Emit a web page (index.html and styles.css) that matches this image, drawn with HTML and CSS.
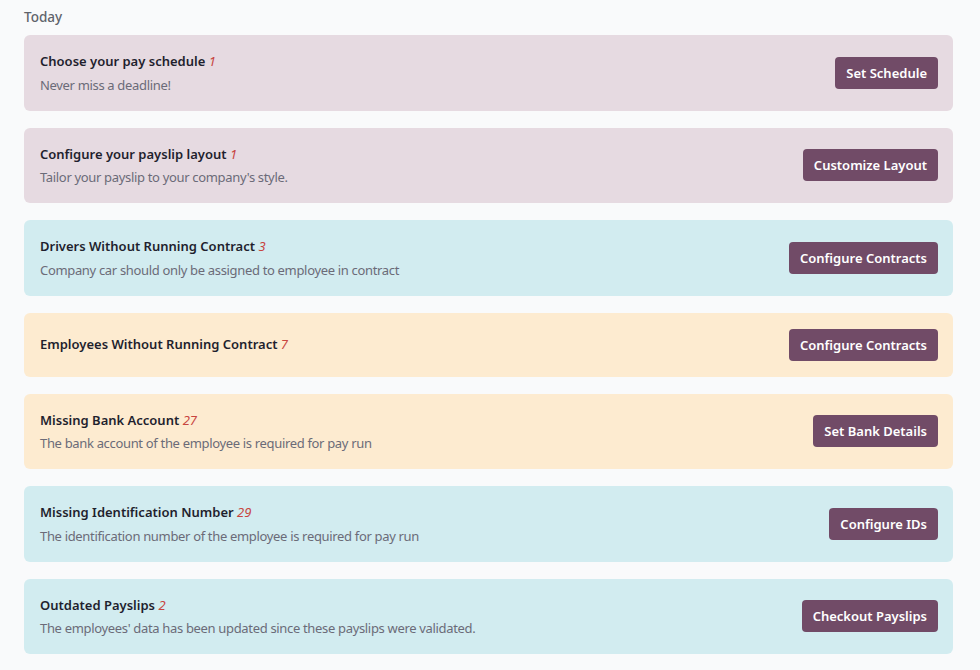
FILE: index.html
```html
<!DOCTYPE html>
<html lang="en">
<head>
  <meta charset="UTF-8" />
  <meta name="viewport" content="width=device-width, initial-scale=1.0"/>
  <title>Payroll Warnings</title>
  <link rel="stylesheet" href="styles.css">
</head>
<body>

<div class="section">
  <div class="section-title">Today</div>

  <div class="card card-pink">
    <div class="card-text">
      <div class="card-title">Choose your pay schedule <span class="count">1</span></div>
      <div class="card-sub">Never miss a deadline!</div>
    </div>
    <button class="card-btn">Set Schedule</button>
  </div>

  <div class="card card-pink">
    <div class="card-text">
      <div class="card-title">Configure your payslip layout <span class="count">1</span></div>
      <div class="card-sub">Tailor your payslip to your company's style.</div>
    </div>
    <button class="card-btn">Customize Layout</button>
  </div>

  <div class="card card-info">
    <div class="card-text">
      <div class="card-title">Drivers Without Running Contract <span class="count">3</span></div>
      <div class="card-sub">Company car should only be assigned to employee in contract</div>
    </div>
    <button class="card-btn">Configure Contracts</button>
  </div>

  <div class="card card-warn">
    <div class="card-text">
      <div class="card-title">Employees Without Running Contract <span class="count">7</span></div>
    </div>
    <button class="card-btn">Configure Contracts</button>
  </div>

  <div class="card card-warn">
    <div class="card-text">
      <div class="card-title">Missing Bank Account <span class="count">27</span></div>
      <div class="card-sub">The bank account of the employee is required for pay run</div>
    </div>
    <button class="card-btn">Set Bank Details</button>
  </div>

  <div class="card card-info">
    <div class="card-text">
      <div class="card-title">Missing Identification Number <span class="count">29</span></div>
      <div class="card-sub">The identification number of the employee is required for pay run</div>
    </div>
    <button class="card-btn">Configure IDs</button>
  </div>

  <div class="card card-info">
    <div class="card-text">
      <div class="card-title">Outdated Payslips <span class="count">2</span></div>
      <div class="card-sub">The employees' data has been updated since these payslips were validated.</div>
    </div>
    <button class="card-btn">Checkout Payslips</button>
  </div>
</div>

</body>
</html>
```

FILE: styles.css
```css
body {
  margin: 0;
  background-color: #f9fafb;
  font-family: "Noto Sans", "Open Sans", sans-serif;
  font-size: 13px;
  color: #1f1f2e;
}
.section {
  padding: 7px 27px 0 24px;
}
.section-title {
  font-size: 13.5px;
  font-weight: 500;
  color: #5f636b;
  line-height: 21px;
  margin-bottom: 7px;
}
.card {
  display: flex;
  align-items: center;
  justify-content: space-between;
  padding: 16px 15px 16px 16px;
  border-radius: 6px;
  margin-bottom: 17px;
}
.card-pink {
  background-color: #e6dae1;
}
.card-info {
  background-color: #d2ecf0;
}
.card-warn {
  background-color: #fdebd0;
}
.card-title {
  font-weight: 600;
  line-height: 21px;
}
.count {
  color: #c8453f;
  font-style: italic;
  font-weight: 400;
}
.card-sub {
  color: #6b6b78;
  line-height: 20px;
  letter-spacing: -0.33px;
  margin-top: 2.5px;
}
.card-btn {
  height: 32px;
  padding: 0 11px;
  font-family: inherit;
  font-size: 13px;
  font-weight: 600;
  color: #fff;
  background-color: #714b67;
  border: none;
  border-radius: 4px;
  cursor: pointer;
}
.card-btn:hover {
  background-color: #624159;
}
```
